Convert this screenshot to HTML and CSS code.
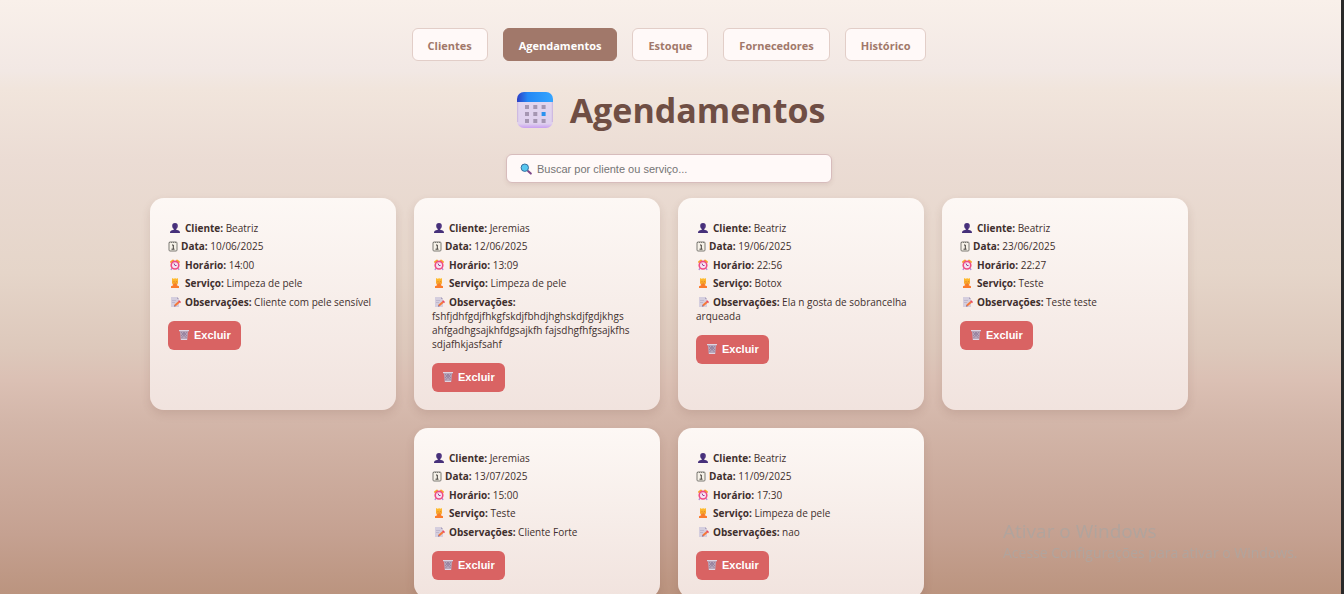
FILE: index.html
```html
<!DOCTYPE html>
<html lang="pt-BR">
<head>
<meta charset="utf-8">
<title>Agendamentos</title>
<link rel="stylesheet" href="styles.css">
</head>
<body>
<svg class="sprite" aria-hidden="true">
  <defs>
    <linearGradient id="head" x1="0" x2="1"><stop offset="0" stop-color="#2c3fc4"/><stop offset=".3" stop-color="#2488f5"/><stop offset="1" stop-color="#34a5ff"/></linearGradient>
    <linearGradient id="sheet" x1="0" y1="0" x2="0" y2="1"><stop offset="0" stop-color="#e3d8ee"/><stop offset=".88" stop-color="#dfd0ee"/><stop offset="1" stop-color="#c99ff0"/></linearGradient>
    <linearGradient id="hair" x1="0" y1="0" x2="0" y2="1"><stop offset="0" stop-color="#ffc02e"/><stop offset="1" stop-color="#f79a2c"/></linearGradient>
  </defs>
  <symbol id="person" viewBox="0 0 12 12"><path fill="#46307a" d="M6 1C4 1 3.1 2.300 3.200 4c.1 1.500.7 2.500 1.600 3v.8L2.300 8.600C1.300 9 1 10 1 11h10c0-1-.3-2-1.300-2.400L7.200 7.800V7c.9-.5 1.500-1.500 1.600-3C8.900 2.300 8 1 6 1z"/><path fill="#643c92" d="M7 2.500c1 .7.8 2.500 0 3.500V2.500z"/></symbol>
  <symbol id="date" viewBox="0 0 10 12"><rect x="1" y="2" width="8" height="9" rx="1" fill="#f6f1e8" stroke="#7c7a75"/><path stroke="#7c7a75" d="M1 2.500h8" stroke-dasharray="1 1"/><path fill="none" stroke="#403c39" d="M4 5h1.300v4M3.500 9.200h3"/></symbol>
  <symbol id="clock" viewBox="0 0 12 12"><path stroke="#f8a22a" stroke-width="2" stroke-linecap="round" d="M2 3l2-1.500M10 3L8 1.500"/><path stroke="#b892d6" stroke-width="1.500" d="M3 9l-1 2M9 9l1 2"/><circle cx="6" cy="6.200" r="3.800" fill="#f5e4f3" stroke="#f04c83" stroke-width="1.600"/><path fill="none" stroke="#9a3c8e" d="M5 4.500l1 2h1.500"/></symbol>
  <symbol id="service" viewBox="0 0 12 12"><path fill="url(#hair)" d="M3 1l1.500.8C5.500 1 7 1 7.700 1.800L9 1v5L8 8H4L3 6z"/><path fill="#fb7b2c" d="M4.500 7h3l.3 1.300L10 9.300V11H2V9.300l2.200-1z"/><path stroke="#d98222" stroke-width=".7" d="M4.500 4.500h1M7 4.500h1M5.500 6.200h1.500"/></symbol>
  <symbol id="note" viewBox="0 0 12 12"><path fill="#d5cede" d="M2 1h6l2 2v8H2z"/><path fill="#aaa0bb" d="M8 1v2h2M3 4h4v.6H3zM3 6h3v.6H3z"/><path stroke="#f77838" stroke-width="2" d="M6 9.500L10 6"/><path fill="#e8455d" d="M9 5l1.300-.8L12 6l-1 1.200z"/><path fill="#754167" d="M5 10.600L5.500 9l1.200 1.200z"/></symbol>
  <symbol id="trash" viewBox="0 0 12 12"><path fill="#b7a6ba" d="M1 1h10v1.500H10L9.300 11H2.700L2 2.500H1z"/><path fill="none" stroke="#846f91" stroke-width=".6" d="M3 3l5.500 6M9 3L3.500 9M5 3l4 4M7 3L3 7"/><path stroke="#e0d5e2" d="M1 1.500h10M3 10.500h6"/></symbol>
  <symbol id="search" viewBox="0 0 12 12"><path stroke="#7d4788" stroke-width="2" stroke-linecap="round" d="M8 8l2.800 2.600"/><circle cx="4.800" cy="4.700" r="3.700" fill="#58c7ef" stroke="#386f9e"/></symbol>
</svg>

<nav class="tabs">
  <button class="tab" type="button">Clientes</button>
  <button class="tab tab-active" type="button">Agendamentos</button>
  <button class="tab" type="button">Estoque</button>
  <button class="tab" type="button">Fornecedores</button>
  <button class="tab" type="button">Histórico</button>
</nav>

<h1 class="title">
  <svg class="title-icon" viewBox="0 0 36 36" aria-hidden="true">
    <rect width="36" height="36" rx="7" fill="url(#sheet)"/>
    <path fill="#c9b4dd" d="M0 10h1.200v20H0zM34.800 10H36v20h-1.200z" opacity=".8"/>
    <path fill="url(#head)" d="M0 10V7a7 7 0 0 1 7-7h22a7 7 0 0 1 7 7v3z"/>
    <path fill="#a596b2" d="M8 13h4v4H8zM16.300 13h4v4h-4zM24.600 13h4v4h-4zM8 20h4v4H8zM16.300 20h4v4h-4zM8 27h4v4H8zM16.300 27h4v4h-4zM24.600 27h4v4h-4z"/>
    <path fill="#2b91ef" d="M24.600 20h4v4h-4z"/>
  </svg>
  Agendamentos
</h1>

<div class="search">
  <svg class="search-icon" aria-hidden="true"><use href="#search"/></svg>
  <input class="search-input" type="text" aria-label="Buscar por cliente ou serviço" placeholder="Buscar por cliente ou serviço...">
</div>

<main class="cards">
  <article class="card">
    <p class="row"><svg class="icon"><use href="#person"/></svg><strong>Cliente:</strong> Beatriz</p>
    <p class="row"><svg class="icon icon-date"><use href="#date"/></svg><strong>Data:</strong> 10/06/2025</p>
    <p class="row"><svg class="icon"><use href="#clock"/></svg><strong>Horário:</strong> 14:00</p>
    <p class="row"><svg class="icon"><use href="#service"/></svg><strong>Serviço:</strong> Limpeza de pele</p>
    <p class="row"><svg class="icon"><use href="#note"/></svg><strong>Observações:</strong> Cliente com pele sensível</p>
    <button class="delete" type="button"><svg class="delete-icon"><use href="#trash"/></svg>Excluir</button>
  </article>
  <article class="card">
    <p class="row"><svg class="icon"><use href="#person"/></svg><strong>Cliente:</strong> Jeremias</p>
    <p class="row"><svg class="icon icon-date"><use href="#date"/></svg><strong>Data:</strong> 12/06/2025</p>
    <p class="row"><svg class="icon"><use href="#clock"/></svg><strong>Horário:</strong> 13:09</p>
    <p class="row"><svg class="icon"><use href="#service"/></svg><strong>Serviço:</strong> Limpeza de pele</p>
    <p class="row"><svg class="icon"><use href="#note"/></svg><strong>Observações:</strong> fshfjdhfgdjfhkgfskdjfbhdjhghskdjfgdjkhgs ahfgadhgsajkhfdgsajkfh fajsdhgfhfgsajkfhs sdjafhkjasfsahf</p>
    <button class="delete" type="button"><svg class="delete-icon"><use href="#trash"/></svg>Excluir</button>
  </article>
  <article class="card">
    <p class="row"><svg class="icon"><use href="#person"/></svg><strong>Cliente:</strong> Beatriz</p>
    <p class="row"><svg class="icon icon-date"><use href="#date"/></svg><strong>Data:</strong> 19/06/2025</p>
    <p class="row"><svg class="icon"><use href="#clock"/></svg><strong>Horário:</strong> 22:56</p>
    <p class="row"><svg class="icon"><use href="#service"/></svg><strong>Serviço:</strong> Botox</p>
    <p class="row"><svg class="icon"><use href="#note"/></svg><strong>Observações:</strong> Ela n gosta de sobrancelha arqueada</p>
    <button class="delete" type="button"><svg class="delete-icon"><use href="#trash"/></svg>Excluir</button>
  </article>
  <article class="card">
    <p class="row"><svg class="icon"><use href="#person"/></svg><strong>Cliente:</strong> Beatriz</p>
    <p class="row"><svg class="icon icon-date"><use href="#date"/></svg><strong>Data:</strong> 23/06/2025</p>
    <p class="row"><svg class="icon"><use href="#clock"/></svg><strong>Horário:</strong> 22:27</p>
    <p class="row"><svg class="icon"><use href="#service"/></svg><strong>Serviço:</strong> Teste</p>
    <p class="row"><svg class="icon"><use href="#note"/></svg><strong>Observações:</strong> Teste teste</p>
    <button class="delete" type="button"><svg class="delete-icon"><use href="#trash"/></svg>Excluir</button>
  </article>
  <article class="card">
    <p class="row"><svg class="icon"><use href="#person"/></svg><strong>Cliente:</strong> Jeremias</p>
    <p class="row"><svg class="icon icon-date"><use href="#date"/></svg><strong>Data:</strong> 13/07/2025</p>
    <p class="row"><svg class="icon"><use href="#clock"/></svg><strong>Horário:</strong> 15:00</p>
    <p class="row"><svg class="icon"><use href="#service"/></svg><strong>Serviço:</strong> Teste</p>
    <p class="row"><svg class="icon"><use href="#note"/></svg><strong>Observações:</strong> Cliente Forte</p>
    <button class="delete" type="button"><svg class="delete-icon"><use href="#trash"/></svg>Excluir</button>
  </article>
  <article class="card">
    <p class="row"><svg class="icon"><use href="#person"/></svg><strong>Cliente:</strong> Beatriz</p>
    <p class="row"><svg class="icon icon-date"><use href="#date"/></svg><strong>Data:</strong> 11/09/2025</p>
    <p class="row"><svg class="icon"><use href="#clock"/></svg><strong>Horário:</strong> 17:30</p>
    <p class="row"><svg class="icon"><use href="#service"/></svg><strong>Serviço:</strong> Limpeza de pele</p>
    <p class="row"><svg class="icon"><use href="#note"/></svg><strong>Observações:</strong> nao</p>
    <button class="delete" type="button"><svg class="delete-icon"><use href="#trash"/></svg>Excluir</button>
  </article>
</main>

<aside class="activation">
  <p class="activation-title">Ativar o Windows</p>
  <p class="activation-text">Acesse Configurações para ativar o Windows.</p>
</aside>
<div class="edge"></div>
</body>
</html>
```
FILE: styles.css
```css
* {
  box-sizing: border-box;
}

body {
  margin: 0;
  padding: 28px 6px 0 0;
  min-height: 100vh;
  font-family: "Open Sans", "Noto Sans", sans-serif;
  font-size: 10px;
  line-height: 14px;
  color: #3f2f2d;
  background: linear-gradient(#f9f0ea 0%, #f2e8e4 12%, #f1e5dc 15%, #ebdcd4 27%, #e5d5c9 46%, #ddc8bb 59%, #dbc0b4 64%, #d3b6a9 71%, #c5a191 90%, #bb947f 100%) fixed;
}

.sprite {
  position: absolute;
  width: 0;
  height: 0;
}

.tabs {
  display: flex;
  justify-content: center;
  gap: 15px;
}

.tab {
  height: 33px;
  padding: 2px 15px 0;
  border: 1px solid #e2cec8;
  border-radius: 6px;
  background: #fff9f8;
  color: #a1786a;
  font: bold 11px/16px "Open Sans", "Noto Sans", sans-serif;
}

.tab-active {
  border-color: #a1786a;
  background: #a1786a;
  color: #fff;
}

.title {
  display: flex;
  justify-content: center;
  align-items: center;
  gap: 17px;
  margin: 24px 0 19px;
  padding-left: 4px;
  color: #6f4e44;
  font-size: 34px;
  line-height: 50px;
}

.title-icon {
  width: 36px;
  height: 36px;
}

.search {
  position: relative;
  width: 326px;
  margin: 0 auto 15px;
}

.search-icon {
  position: absolute;
  left: 14px;
  top: 9px;
  width: 12px;
  height: 12px;
}

.search-input {
  display: block;
  width: 100%;
  height: 29px;
  padding: 0 12px 0 30px;
  border: 1px solid #d7bcbc;
  border-radius: 6px;
  background: #fff9f8;
  box-shadow: 0 2px 4px rgba(120, 80, 70, 0.12);
  font: 11px "Liberation Sans", sans-serif;
}

.search-input::placeholder {
  color: #757575;
}

.cards {
  display: flex;
  flex-wrap: wrap;
  justify-content: center;
  gap: 18px;
  max-width: 1200px;
  margin: 0 auto;
}

.card {
  width: 246px;
  padding: 23px 14px 18px 18px;
  border-radius: 14px;
  background: linear-gradient(#fdf8f5, #f1e3de);
  box-shadow: 0 4px 10px rgba(100, 60, 50, 0.14);
}

.row {
  margin: 0 0 4px;
}

.row:nth-child(even) {
  min-height: 15px;
}

.icon {
  width: 12px;
  height: 12px;
  margin: 0 4px 0 1px;
  vertical-align: -2px;
}

.icon-date {
  width: 10px;
  margin: 0 3px 0 0;
}

.row strong {
  font-weight: 700;
}

.delete {
  display: flex;
  align-items: center;
  gap: 4px;
  height: 29px;
  margin-top: 12px;
  padding: 0 10px 1px;
  border: 0;
  border-radius: 6px;
  background: #d96363;
  color: #fff;
  font: bold 11px "Liberation Sans", sans-serif;
}

.delete-icon {
  width: 12px;
  height: 12px;
}

.activation {
  position: fixed;
  right: 40px;
  bottom: 31px;
  width: 301px;
  color: #b1a49d;
  white-space: nowrap;
}

.activation p {
  margin: 0;
}

.activation-title {
  font-size: 19px;
  line-height: 24px;
}

.activation-text {
  font-size: 14px;
  line-height: 20px;
}

.edge {
  position: fixed;
  top: 0;
  right: 0;
  bottom: 0;
  width: 3px;
  background: #292929;
}
```
